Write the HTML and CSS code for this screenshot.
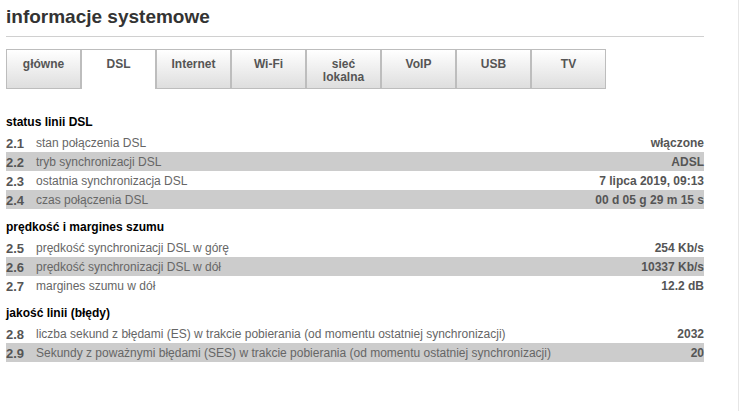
FILE: index.html
```html
<!DOCTYPE html>
<html lang="pl">
<head>
<meta charset="UTF-8" />
<title>informacje systemowe</title>
<link rel="stylesheet" href="styles.css">
</head>
<body>
<div class="page">
  <h1 class="title">informacje systemowe</h1>

  <ul class="tabs">
    <li class="tab">główne</li>
    <li class="tab active">DSL</li>
    <li class="tab">Internet</li>
    <li class="tab">Wi-Fi</li>
    <li class="tab">sieć<br>lokalna</li>
    <li class="tab">VoIP</li>
    <li class="tab">USB</li>
    <li class="tab">TV</li>
  </ul>

  <section class="group">
    <h2>status linii DSL</h2>
    <div class="row"><span class="num">2.1</span><span class="label">stan połączenia DSL</span><span class="value">włączone</span></div>
    <div class="row alt"><span class="num">2.2</span><span class="label">tryb synchronizacji DSL</span><span class="value">ADSL</span></div>
    <div class="row"><span class="num">2.3</span><span class="label">ostatnia synchronizacja DSL</span><span class="value">7 lipca 2019, 09:13</span></div>
    <div class="row alt"><span class="num">2.4</span><span class="label">czas połączenia DSL</span><span class="value">00 d 05 g 29 m 15 s</span></div>
  </section>

  <section class="group">
    <h2>prędkość i margines szumu</h2>
    <div class="row"><span class="num">2.5</span><span class="label">prędkość synchronizacji DSL w górę</span><span class="value">254 Kb/s</span></div>
    <div class="row alt"><span class="num">2.6</span><span class="label">prędkość synchronizacji DSL w dół</span><span class="value">10337 Kb/s</span></div>
    <div class="row"><span class="num">2.7</span><span class="label">margines szumu w dół</span><span class="value">12.2 dB</span></div>
  </section>

  <section class="group">
    <h2>jakość linii (błędy)</h2>
    <div class="row"><span class="num">2.8</span><span class="label">liczba sekund z błędami (ES) w trakcie pobierania (od momentu ostatniej synchronizacji)</span><span class="value">2032</span></div>
    <div class="row alt"><span class="num">2.9</span><span class="label">Sekundy z poważnymi błędami (SES) w trakcie pobierania (od momentu ostatniej synchronizacji)</span><span class="value">20</span></div>
  </section>
</div>
</body>
</html>
```

FILE: styles.css
```css
body {
  margin: 0;
  font-family: "Liberation Sans", Arial, sans-serif;
  background: #fff;
  color: #666;
}
.page {
  width: 739px;
  min-height: 100vh;
  border-right: 1px solid #e6e6e6;
  box-sizing: border-box;
  padding: 0 34px 0 6px;
}
.title {
  margin: 0;
  padding: 6px 0 8px;
  font-size: 19px;
  font-weight: bold;
  color: #333;
  border-bottom: 1px solid #d0d0d0;
}
.tabs {
  list-style: none;
  margin: 12px 0 0;
  padding: 0;
  display: flex;
}
.tab {
  width: 75px;
  height: 40px;
  box-sizing: border-box;
  border: 1px solid #bdbdbd;
  background: linear-gradient(#fff, #dedede);
  font-size: 12px;
  font-weight: bold;
  color: #555;
  text-align: center;
  padding-top: 8px;
  line-height: 13px;
}
.tab.active {
  background: #fff;
  border-bottom: none;
}
.group {
  margin-top: 9px;
}
.group:first-of-type {
  margin-top: 24px;
}
.group h2 {
  margin: 0 0 1px;
  font-size: 12px;
  font-weight: bold;
  color: #000;
  line-height: 19px;
}
.row {
  display: flex;
  align-items: center;
  height: 19px;
  font-size: 12px;
}
.row.alt {
  background: #cccccc;
}
.num {
  width: 30px;
  font-size: 13px;
  font-weight: bold;
  color: #555;
  padding-top: 2px;
}
.label {
  flex: 1;
}
.value {
  font-weight: bold;
  color: #555;
  text-align: right;
}
```
